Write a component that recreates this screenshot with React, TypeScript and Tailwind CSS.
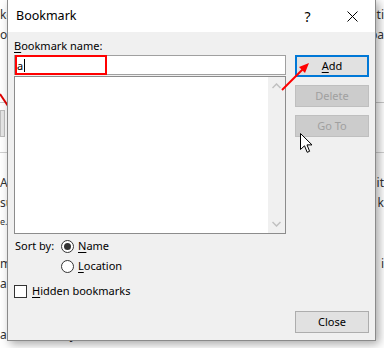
import React from "react";

const font = { fontFamily: '"Noto Sans", "Segoe UI", sans-serif' };

function U({ children }: { children: React.ReactNode }) {
  return <span className="underline underline-offset-[2px] decoration-[1px]">{children}</span>;
}

function Radio({ checked }: { checked?: boolean }) {
  return (
    <span className="flex h-[13px] w-[13px] items-center justify-center rounded-full border border-[#333333] bg-white">
      {checked && <span className="h-[7px] w-[7px] rounded-full bg-[#333333]" />}
    </span>
  );
}

function BgRow({ left, right, h, extra }: { left?: string; right?: string; h: string; extra?: string }) {
  return (
    <div className={`flex items-center justify-between ${h} ${extra ?? ""}`}>
      <span>{left}</span>
      <span>{right}</span>
    </div>
  );
}

export default function App() {
  return (
    <div
      className="relative h-[348px] w-[384px] overflow-hidden bg-white text-[#222]"
      style={{ fontFamily: '"Noto Sans", sans-serif' }}
    >
      {/* background document */}
      <div className="flex flex-col text-[12px] leading-none text-[#333]">
        <div className="h-[8px]" />
        <BgRow left="ke" right="ati" h="h-[14px]" />
        <div className="h-[6px]" />
        <BgRow left="or" right="pa" h="h-[14px]" />
        <div className="h-[60px]" />
        <div className="h-px bg-[#c8c8c8]" />
        <div className="mt-[7px] h-[27px] w-[5px] border border-[#bdbdbd] bg-[#e6e6e6]" />
        <div className="mt-[15px] h-px bg-[#d0d0d0]" />
        <div className="h-[23px]" />
        <BgRow left="A" right="it" h="h-[14px]" />
        <div className="h-[6px]" />
        <BgRow left="su" right="k" h="h-[14px]" />
        <div className="h-[6px]" />
        <BgRow left="e." h="h-[10px]" extra="text-[9px]" />
        <div className="h-[31px]" />
        <BgRow left="m" right="i" h="h-[14px]" />
        <div className="h-[6px]" />
        <BgRow left="a" h="h-[14px]" />
        <div className="h-[38px]" />
        <div className="h-[14px] whitespace-nowrap">all and then you can check the result.</div>
      </div>

      {/* left red line from another arrow */}
      <svg className="absolute left-0 top-[92px]" width="10" height="16" viewBox="0 0 10 16">
        <line x1="0" y1="2" x2="8" y2="14" stroke="#e00000" strokeWidth="2" />
      </svg>

      {/* dialog */}
      <div
        className="absolute left-[7px] top-[-1px] flex h-[342px] w-[369px] flex-col border border-[#8a8a8a] bg-[#f0f0f0] shadow-[3px_3px_9px_rgba(0,0,0,0.35)]"
        style={font}
      >
        <div className="flex h-[32px] shrink-0 items-center bg-white pl-[8px]">
          <span className="text-[12.5px] text-black">Bookmark</span>
          <div className="ml-auto flex h-full">
            <div className="flex w-[45px] items-center justify-center text-[14px] text-black">?</div>
            <div className="flex w-[45px] items-center justify-center">
              <svg width="11" height="11" viewBox="0 0 11 11">
                <path d="M0.5 0.5 L10.5 10.5 M10.5 0.5 L0.5 10.5" stroke="#000" strokeWidth="1" />
              </svg>
            </div>
          </div>
        </div>

        <div className="flex flex-1 gap-[9px] px-[6px] pb-[7px] text-[11px] text-black">
          {/* left column */}
          <div className="flex w-[272px] flex-col">
            <div className="flex h-[23px] items-end pb-[4px] leading-none">
              <span>
                <U>B</U>ookmark name:
              </span>
            </div>
            <div className="relative flex h-[20px] items-center border border-[#a0a0a0] bg-white pl-[2px]">
              <span className="leading-none">a</span>
              <span className="ml-[1px] h-[13px] w-px bg-black" />
              <div className="absolute left-[0px] top-[-1px] h-[20px] w-[92px] border-2 border-[#ff0000]" />
            </div>
            <div className="mt-px flex h-[158px] border border-[#8c8c8c] bg-white">
              <div className="flex-1" />
              <div className="flex w-[17px] flex-col items-center justify-between bg-[#f0f0f0] py-[6px]">
                <svg width="9" height="6" viewBox="0 0 9 6">
                  <path d="M0.5 5 L4.5 1 L8.5 5" fill="none" stroke="#c0c0c0" strokeWidth="1.5" />
                </svg>
                <svg width="9" height="6" viewBox="0 0 9 6">
                  <path d="M0.5 1 L4.5 5 L8.5 1" fill="none" stroke="#c0c0c0" strokeWidth="1.5" />
                </svg>
              </div>
            </div>
            <div className="mt-[2px] flex h-[20px] items-center">
              <span className="w-[47px] pl-px">Sort by:</span>
              <Radio checked />
              <span className="ml-[4px]">
                <U>N</U>ame
              </span>
            </div>
            <div className="flex h-[20px] items-center pl-[47px]">
              <Radio />
              <span className="ml-[4px]">
                <U>L</U>ocation
              </span>
            </div>
            <div className="mt-[5px] flex h-[20px] items-center">
              <span className="h-[13px] w-[13px] border border-[#333333] bg-white" />
              <span className="ml-[5px]">
                <U>H</U>idden bookmarks
              </span>
            </div>
          </div>

          {/* right column */}
          <div className="flex w-[74px] flex-col pt-[23px]">
            <div className="flex h-[22px] items-center justify-center border-2 border-[#0078d7] bg-[#e1e1e1]">
              <span>
                <U>A</U>dd
              </span>
            </div>
            <div className="mt-[8px] flex h-[22px] items-center justify-center border border-[#bfbfbf] bg-[#cccccc] text-[#a0a0a0]">
              Delete
            </div>
            <div className="mt-[8px] flex h-[22px] items-center justify-center border border-[#bfbfbf] bg-[#cccccc] text-[#a0a0a0]">
              Go To
            </div>
            <div className="mt-auto flex h-[22px] items-center justify-center border border-[#adadad] bg-[#e1e1e1]">
              Close
            </div>
          </div>
        </div>
      </div>

      {/* red arrow */}
      <svg className="absolute left-[278px] top-[58px]" width="36" height="36" viewBox="0 0 36 36">
        <line x1="4" y1="32" x2="28" y2="8" stroke="#ff0000" strokeWidth="2" />
        <path d="M31 5 L21 9 L27 15 Z" fill="#ff0000" />
      </svg>

      {/* mouse cursor */}
      <svg className="absolute left-[300px] top-[133px]" width="13" height="21" viewBox="0 0 13 21">
        <path
          d="M0.5 0.5 L0.5 16.5 L4.5 12.8 L7.2 19.3 L9.6 18.3 L7 11.9 L12 11.9 Z"
          fill="#fff"
          stroke="#000"
          strokeWidth="1"
          strokeLinejoin="round"
        />
      </svg>
    </div>
  );
}
